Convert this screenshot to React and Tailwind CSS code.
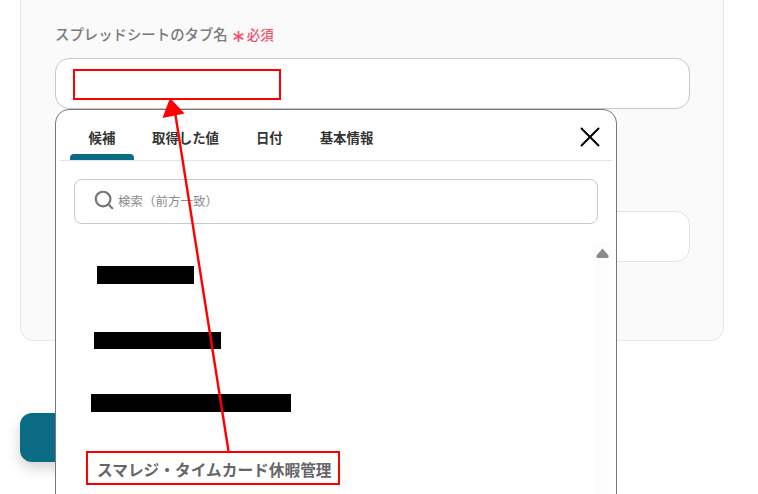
import { X, Search } from 'lucide-react';

const font = { fontFamily: '"Noto Sans CJK JP", "Noto Sans", sans-serif' };

const tabs = [
  { label: '候補', cls: 'w-[64px]', active: true },
  { label: '取得した値', cls: 'ml-[18px]' },
  { label: '日付', cls: 'ml-[37px]' },
  { label: '基本情報', cls: 'ml-[37px]' },
];

const App = () => {
  return (
    <div className="relative w-[758px] h-[494px] overflow-hidden bg-white" style={font}>
      {/* form card, its top is scrolled off */}
      <div className="ml-5 w-[704px] h-[341px] pt-[24px] px-[34px] bg-[#fafafa] border border-t-0 border-[#e8e8e8] rounded-b-[14px]">
        <div className="flex items-center h-[20px] text-[14.4px] leading-[20px] font-medium text-[#7a7a7a]">
          <span>スプレッドシートのタブ名</span>
          <svg className="ml-[5px] mt-[5px]" width="11" height="11" viewBox="0 0 11 11">
            <path d="M5.500 0 V11 M0.700 2.700 L10.300 8.300 M10.300 2.700 L0.700 8.300" stroke="#f4506e" strokeWidth="1.600" />
          </svg>
          <span className="ml-[3px] text-[13.500px] font-medium text-[#f4506e]">必須</span>
        </div>
        <div className="mt-[14px] w-[635px] h-[51px] bg-white border border-[#c8c8c8] rounded-[14px]" />
        <div className="mt-[102px] w-[635px] h-[51px] bg-white border border-[#e4e4e4] rounded-[14px]" />
      </div>

      <div className="mt-[72px] ml-5 w-[120px] h-[49px] bg-[#0b6b85] rounded-[12px] shadow-[0_6px_14px_rgba(0,0,0,0.18)]" />

      {/* popup */}
      <div className="absolute left-[55px] top-[109px] w-[562px] h-[420px] bg-white border border-[#777] rounded-t-[14px] px-[4px]">
        <div className="relative flex h-[51px] pl-[10px] border-b border-[#e4e4e4]">
          {tabs.map((t) => (
            <div key={t.label} className={`relative ${t.cls} pt-[17px] text-center text-[13.400px] leading-[20px] font-bold text-[#333]`}>
              {t.label}
              {t.active && <div className="absolute left-0 right-0 bottom-0 h-[6px] bg-[#0b6b85] rounded-t-[4px]" />}
            </div>
          ))}
          <X className="absolute right-[5px] top-[10px] w-[34px] h-[34px] text-black" strokeWidth={1.4} />
        </div>

        <div className="mt-[18px] mx-[14px] w-[524px] h-[45px] flex items-center pl-[18px] border border-[#c8c8c8] rounded-[8px]">
          <Search className="w-[22px] h-[22px] -mt-[3px] text-[#777]" strokeWidth={2.400} />
          <span className="ml-[3px] text-[12.500px] text-[#8c8c8c]">検索（前方一致）</span>
        </div>

        <div className="relative mt-[18px] h-[300px]">
          <div className="absolute right-0 top-0 bottom-0 w-[19px] bg-[#fcfcfc]">
            <svg className="absolute left-[3px] top-[6px]" width="13" height="10" viewBox="0 0 13 10">
              <path d="M6.5 0.5 L12.5 7.5 Q13 10 11 10 L2 10 Q0 10 0.5 7.5 Z" fill="#8a8a8a" />
            </svg>
          </div>
          <div className="pt-[24px]">
            <div className="ml-[37px] w-[97px] h-[18px] bg-black" />
            <div className="mt-[48px] ml-[34px] w-[127px] h-[17px] bg-black" />
            <div className="mt-[45px] ml-[31px] w-[200px] h-[18px] bg-black" />
            <div className="mt-[47px] ml-[37px] text-[15.700px] leading-[22px] font-bold text-[#666] whitespace-nowrap">スマレジ・タイムカード休暇管理</div>
          </div>
        </div>
      </div>

      {/* red annotations */}
      <div className="absolute left-[73px] top-[69px] w-[208px] h-[31px] border-2 border-[#f00]" />
      <div className="absolute left-[86px] top-[451px] w-[254px] h-[34px] border-2 border-[#f00]" />
      <svg className="absolute left-0 top-0 pointer-events-none" width="758" height="494" viewBox="0 0 758 494">
        <line x1="228.5" y1="451" x2="175" y2="112" stroke="#f00" strokeWidth="2.400" />
        <polygon points="170,98 162.500,118 184.500,113.500" fill="#f00" />
      </svg>
    </div>
  );
};

export default App;
